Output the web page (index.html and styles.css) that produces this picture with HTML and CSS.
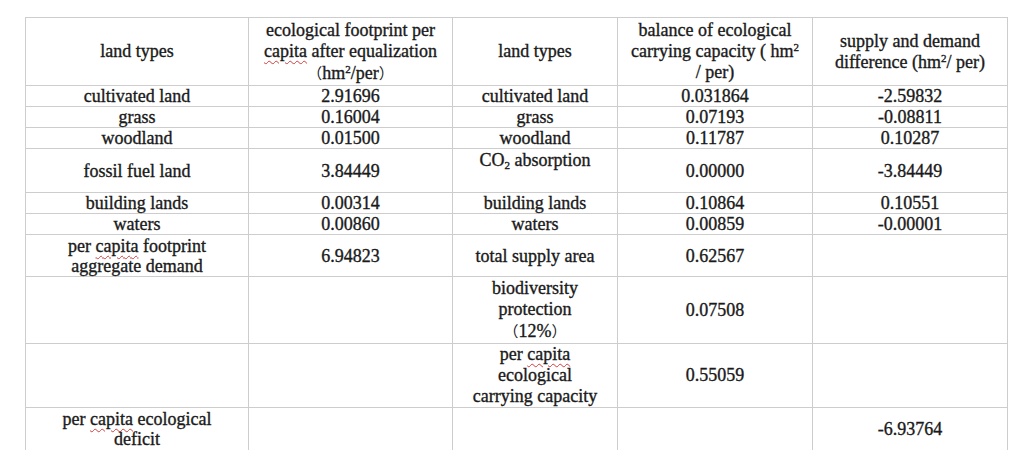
FILE: index.html
```html
<!DOCTYPE html>
<html>
<head>
<meta charset="utf-8">
<link rel="stylesheet" href="styles.css">
</head>
<body>
<table class="eco">
  <colgroup>
    <col class="c1"><col class="c2"><col class="c3"><col class="c4"><col class="c5">
  </colgroup>
  <tr class="r-head">
    <td>land types</td>
    <td>ecological footprint per<br><span class="sp">capita</span> after equalization<br><span class="cjk">（</span>hm<sup>2</sup>/per<span class="cjk">）</span></td>
    <td>land types</td>
    <td>balance of ecological<br>carrying capacity ( hm<sup>2</sup><br>/ per)</td>
    <td>supply and demand<br>difference (hm<sup>2</sup>/ per)</td>
  </tr>
  <tr class="r-1">
    <td>cultivated land</td><td>2.91696</td><td>cultivated land</td><td>0.031864</td><td>-2.59832</td>
  </tr>
  <tr class="r-1">
    <td>grass</td><td>0.16004</td><td>grass</td><td>0.07193</td><td>-0.08811</td>
  </tr>
  <tr class="r-1">
    <td>woodland</td><td>0.01500</td><td>woodland</td><td>0.11787</td><td>0.10287</td>
  </tr>
  <tr class="r-fossil">
    <td>fossil fuel land</td><td>3.84449</td><td class="top">CO<sub>2</sub> absorption</td><td>0.00000</td><td>-3.84449</td>
  </tr>
  <tr class="r-1">
    <td>building lands</td><td>0.00314</td><td>building lands</td><td>0.10864</td><td>0.10551</td>
  </tr>
  <tr class="r-1b">
    <td>waters</td><td>0.00860</td><td>waters</td><td>0.00859</td><td>-0.00001</td>
  </tr>
  <tr class="r-2">
    <td>per <span class="sp">capita</span> footprint<br>aggregate demand</td><td>6.94823</td><td>total supply area</td><td>0.62567</td><td></td>
  </tr>
  <tr class="r-3">
    <td></td><td></td><td>biodiversity<br>protection<br><span class="cjk">（</span>12%<span class="cjk">）</span></td><td>0.07508</td><td></td>
  </tr>
  <tr class="r-3b">
    <td></td><td></td><td>per <span class="sp">capita</span><br>ecological<br>carrying capacity</td><td>0.55059</td><td></td>
  </tr>
  <tr class="r-last">
    <td class="top2">per <span class="sp">capita</span> ecological<br>deficit</td><td></td><td></td><td></td><td>-6.93764</td>
  </tr>
</table>
</body>
</html>
```

FILE: styles.css
```css
html, body {
  margin: 0;
  padding: 0;
  background: #ffffff;
}

body {
  padding: 17px 0 0 25px;
  height: 476px;
  box-sizing: border-box;
  overflow: hidden;
}

.eco {
  border-collapse: collapse;
  table-layout: fixed;
  width: 983px;
  font-family: "Liberation Serif", "Noto Sans CJK SC", serif;
  font-size: 18px;
  line-height: 20px;
  color: #1a1a1a;
  -webkit-text-stroke: 0.35px #1a1a1a;
}

.c1 { width: 223px; }
.c2 { width: 204px; }
.c3 { width: 165px; }
.c4 { width: 195px; }
.c5 { width: 195px; }

.eco td {
  border: 1px solid #cdcdcd;
  padding: 0;
  text-align: center;
  vertical-align: middle;
}

.eco tr.r-last td {
  border-bottom: none;
}

.r-head { height: 68px; }
.r-head td { line-height: 21px; }
.r-1 { height: 21px; }
.r-1b { height: 20px; }
.r-fossil { height: 44px; }
.r-2 { height: 42px; }
.r-3 { height: 67px; }
.r-3 td { line-height: 21px; }
.r-3b { height: 63px; }
.r-3b td { line-height: 21px; }
.r-last { height: 42px; }

.eco td.top {
  vertical-align: top;
  padding-top: 1px;
}

.eco td.top2 {
  vertical-align: top;
  padding-top: 1px;
}

.eco sup {
  font-size: 11px;
  line-height: 0;
  vertical-align: 6px;
}

.eco sub {
  font-size: 11px;
  line-height: 0;
  vertical-align: -3px;
}

.cjk {
  font-family: "Noto Sans CJK SC", sans-serif;
  font-size: 15px;
  -webkit-text-stroke: 0;
}

.sp {
  text-decoration: underline wavy #d43c3c;
  text-decoration-thickness: 1px;
  text-underline-offset: 3px;
}
```
